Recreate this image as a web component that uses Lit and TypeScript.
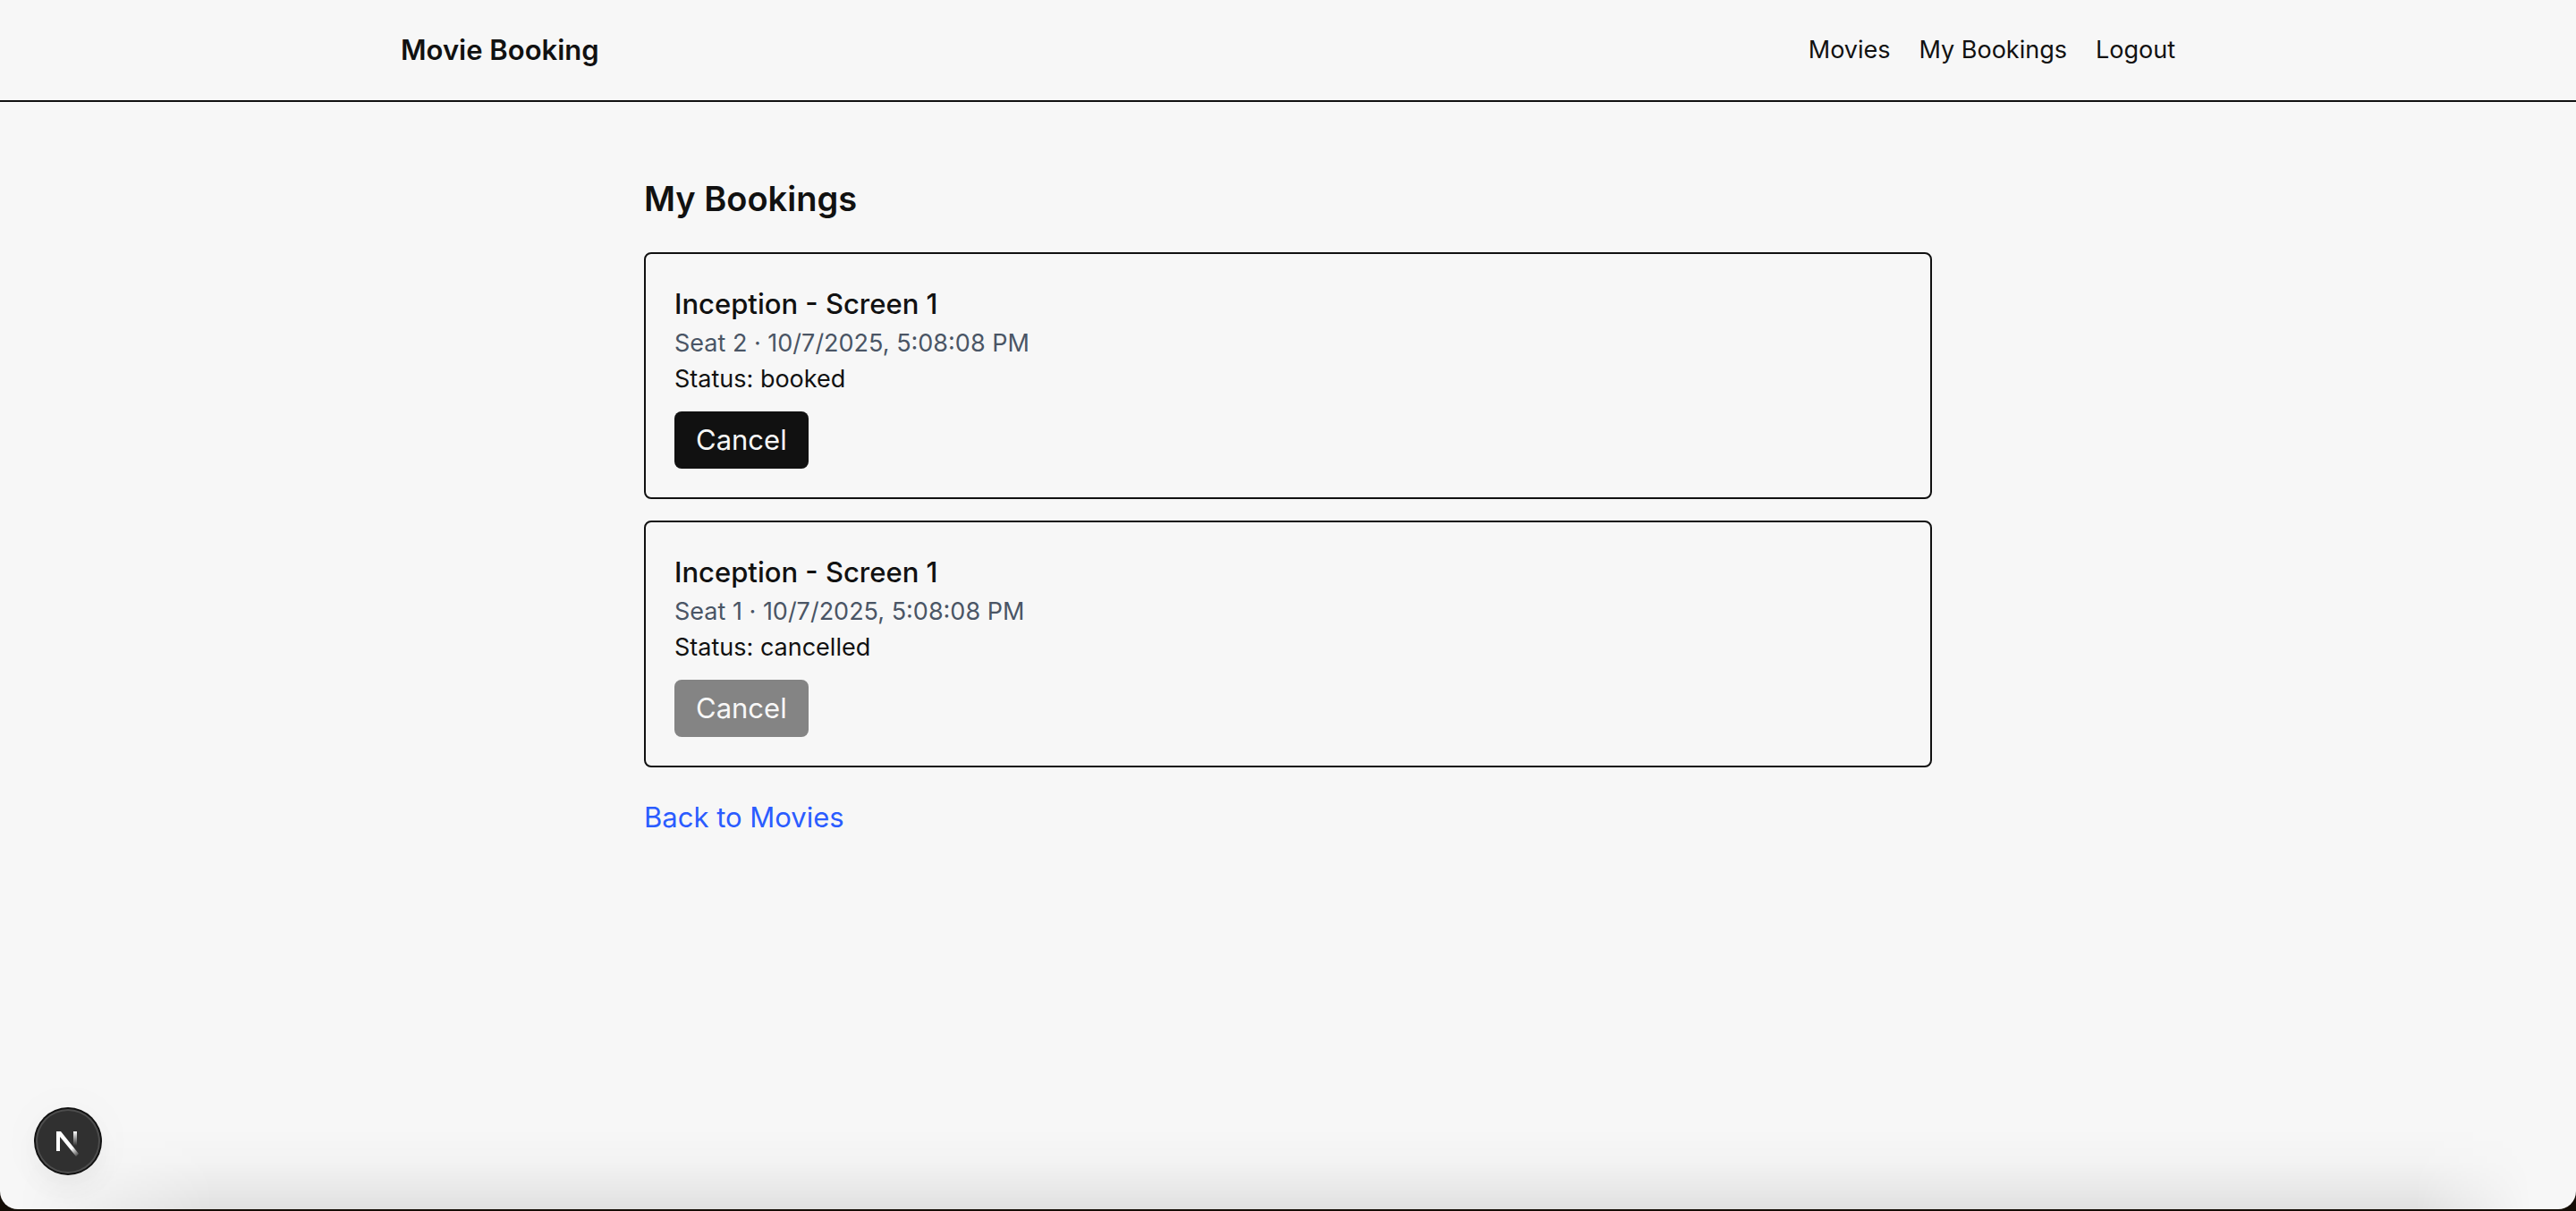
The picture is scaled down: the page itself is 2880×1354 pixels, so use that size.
import { LitElement, html, css } from "lit";
import { customElement, property } from "lit/decorators.js";

interface Booking {
  title: string;
  seat: number;
  time: string;
  status: "booked" | "cancelled";
}

const BOOKINGS: Booking[] = [
  { title: "Inception - Screen 1", seat: 2, time: "10/7/2025, 5:08:08 PM", status: "booked" },
  { title: "Inception - Screen 1", seat: 1, time: "10/7/2025, 5:08:08 PM", status: "cancelled" },
];

@customElement("booking-card")
export class BookingCard extends LitElement {
  static styles = css`
    :host {
      display: block;
    }
    .card {
      border: 2px solid #111;
      border-radius: 8px;
      padding: 32px;
      background: #f7f7f7;
    }
    .title {
      margin: 0;
      font-size: 31px;
      font-weight: 500;
      line-height: 48px;
    }
    .line {
      margin: 0;
      font-size: 27px;
      line-height: 40px;
    }
    .muted {
      color: #4a5565;
    }
    .cancel {
      display: block;
      margin-top: 16px;
      padding: 8px 24px;
      border: 0;
      border-radius: 8px;
      background: #111;
      color: #f7f7f7;
      font-family: inherit;
      font-size: 31px;
      line-height: 48px;
      cursor: pointer;
    }
    .cancel:disabled {
      background: #848484;
      cursor: default;
    }
  `;

  @property({ attribute: false }) booking!: Booking;

  render() {
    const b = this.booking;
    return html`<article class="card">
      <h2 class="title">${b.title}</h2>
      <p class="line muted">Seat ${b.seat} · ${b.time}</p>
      <p class="line">Status: ${b.status}</p>
      <button class="cancel" type="button" ?disabled=${b.status === "cancelled"}>Cancel</button>
    </article>`;
  }
}

@customElement("app-root")
export class AppRoot extends LitElement {
  static styles = css`
    :host {
      display: block;
      padding-bottom: 2px;
      background: #140d06;
      color: #111;
      font-family: Inter, "Liberation Sans", sans-serif;
    }
    .window {
      position: relative;
      box-sizing: border-box;
      min-height: calc(100vh - 2px);
      overflow: hidden;
      background: #f7f7f7;
      border-bottom-left-radius: 20px;
      border-bottom-right-radius: 20px;
    }
    .header {
      border-bottom: 2px solid #111;
    }
    .bar {
      display: flex;
      align-items: center;
      justify-content: space-between;
      box-sizing: border-box;
      max-width: 2048px;
      margin: 0 auto;
      padding: 32px;
    }
    a {
      color: inherit;
      text-decoration: none;
    }
    .brand {
      font-size: 31px;
      font-weight: 600;
      line-height: 48px;
    }
    .nav {
      display: flex;
      gap: 32px;
      font-size: 27px;
      line-height: 40px;
    }
    .main {
      box-sizing: border-box;
      max-width: 1536px;
      margin: 0 auto;
      padding: 80px 48px;
    }
    .heading {
      margin: 0 0 32px;
      font-size: 38px;
      font-weight: 600;
      line-height: 56px;
    }
    .list {
      display: flex;
      flex-direction: column;
      gap: 24px;
      margin-bottom: 32px;
    }
    .back {
      color: #2b5cff;
      font-size: 31px;
      line-height: 48px;
    }
    .shade {
      position: absolute;
      left: 0;
      right: 0;
      bottom: 0;
      height: 90px;
      pointer-events: none;
      background: linear-gradient(
        to top,
        rgb(0 0 0 / 0.09),
        rgb(0 0 0 / 0.05) 26px,
        rgb(0 0 0 / 0.015) 54px,
        transparent
      );
      mask-image: linear-gradient(to right, transparent 20px, #000 240px, #000 calc(100% - 180px), transparent calc(100% - 50px));
    }
    .badge {
      position: absolute;
      left: 38px;
      bottom: 38px;
      width: 76px;
      height: 76px;
      padding: 0;
      border: 0;
      border-radius: 50%;
      background: none;
      box-shadow: 0 16px 32px -4px rgb(0 0 0 / 0.05), 0 2px 60px rgb(0 0 0 / 0.03);
    }
    .logo {
      display: block;
      width: 76px;
      height: 76px;
    }
  `;

  render() {
    return html`<div class="window">
      <header class="header">
        <div class="bar">
          <a class="brand" href="#">Movie Booking</a>
          <nav class="nav">
            <a href="#movies">Movies</a>
            <a href="#bookings">My Bookings</a>
            <a href="#logout">Logout</a>
          </nav>
        </div>
      </header>
      <main class="main">
        <h1 class="heading">My Bookings</h1>
        <div class="list">
          ${BOOKINGS.map((b) => html`<booking-card .booking=${b}></booking-card>`)}
        </div>
        <a class="back" href="#movies">Back to Movies</a>
      </main>
      <div class="shade"></div>
      <button class="badge" type="button" aria-label="Next.js">
        <svg class="logo" viewBox="0 0 76 76" fill="none" aria-hidden="true">
          <defs>
            <linearGradient id="diag" gradientUnits="userSpaceOnUse" x1="39" y1="42" x2="50" y2="55">
              <stop stop-color="#fff" />
              <stop offset="0.3" stop-color="#fff" />
              <stop offset="1" stop-color="#fff" stop-opacity="0" />
            </linearGradient>
            <linearGradient id="stem" gradientUnits="userSpaceOnUse" x1="46" y1="27" x2="46" y2="43">
              <stop stop-color="#fff" />
              <stop offset="1" stop-color="#fff" stop-opacity="0" />
            </linearGradient>
          </defs>
          <circle cx="38" cy="38" r="38" fill="#111" />
          <circle cx="38" cy="38" r="36" fill="#4d4d4d" />
          <circle cx="38" cy="38" r="34" fill="#303030" />
          <path d="M25 27h5L50 52l-3 3L29 33v16h-4z" fill="url(#diag)" />
          <path d="M44 27h4v16h-4z" fill="url(#stem)" />
        </svg>
      </button>
    </div>`;
  }
}
